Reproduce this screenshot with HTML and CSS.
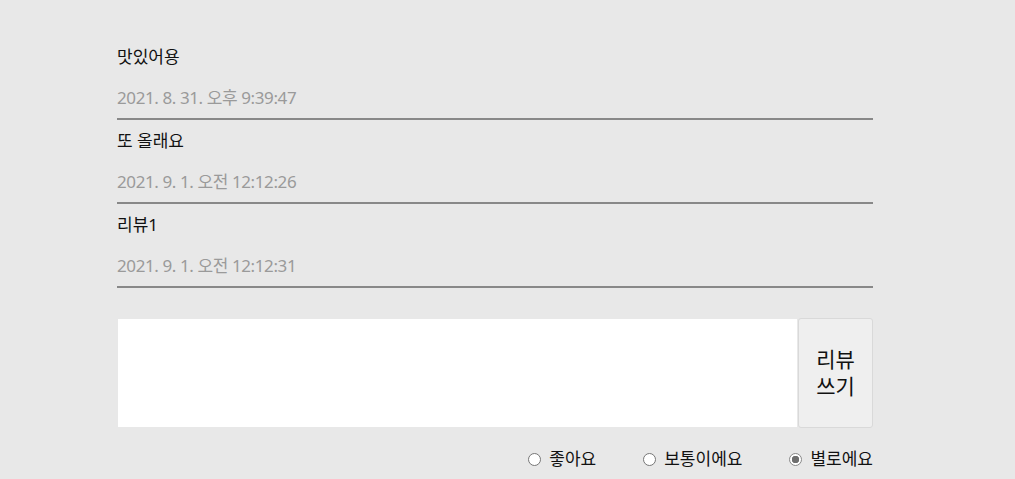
FILE: index.html
```html
<!DOCTYPE html>
<html lang="ko">
<head>
<meta charset="utf-8">
<link rel="stylesheet" href="styles.css">
</head>
<body>
<main class="wrap">
  <ul class="reviews">
    <li class="review">
      <p class="review-text">맛있어용</p>
      <p class="review-date">2021. 8. 31. 오후 9:39:47</p>
    </li>
    <li class="review">
      <p class="review-text">또 올래요</p>
      <p class="review-date">2021. 9. 1. 오전 12:12:26</p>
    </li>
    <li class="review">
      <p class="review-text">리뷰1</p>
      <p class="review-date">2021. 9. 1. 오전 12:12:31</p>
    </li>
  </ul>
  <form class="write">
    <div class="write-row">
      <textarea class="write-input"></textarea>
      <button type="button" class="write-btn">리뷰<br>쓰기</button>
    </div>
    <div class="ratings">
      <label class="rating"><input type="radio" name="r" class="radio">좋아요</label>
      <label class="rating"><input type="radio" name="r" class="radio">보통이에요</label>
      <label class="rating"><input type="radio" name="r" class="radio" checked>별로에요</label>
    </div>
  </form>
</main>
</body>
</html>
```

FILE: styles.css
```css
html, body {
  margin: 0;
  padding: 0;
  background: #e8e8e8;
}
body {
  font-family: "Noto Sans", "Noto Sans CJK KR", sans-serif;
  font-size: 17px;
  color: #111;
}
.wrap {
  width: 756px;
  margin-left: 117px;
  padding-top: 36px;
}
.reviews {
  list-style: none;
  margin: 0;
  padding: 0;
}
.review {
  padding: 11px 0 10px;
  border-bottom: 2px solid #888;
}
.review-text {
  margin: 0;
  line-height: 20px;
  font-size: 17px;
  color: #111;
}
.review-date {
  margin: 21px 0 0;
  line-height: 20px;
  font-size: 17px;
  letter-spacing: -0.4px;
  color: #9a9a9a;
}
.write {
  margin-top: 30px;
}
.write-row {
  display: flex;
  height: 110px;
}
.write-input {
  flex: 1;
  margin: 0;
  border: 1px solid #e8e8e8;
  background: #fff;
  resize: none;
  padding: 4px;
  font-family: inherit;
  font-size: 16px;
  outline: none;
}
.write-btn {
  width: 75px;
  margin: 0;
  padding: 0;
  border: 1px solid #d9d9d9;
  border-radius: 3px;
  background: #efefef;
  font-family: inherit;
  font-size: 21px;
  line-height: 27px;
  color: #111;
}
.ratings {
  display: flex;
  justify-content: flex-end;
  gap: 47px;
  margin-top: 21px;
  line-height: 20px;
}
.rating {
  display: flex;
  align-items: center;
  font-size: 17px;
  color: #111;
}
.radio {
  appearance: none;
  -webkit-appearance: none;
  width: 13px;
  height: 13px;
  margin: 0 8px 0 0;
  border: 1px solid #767676;
  border-radius: 50%;
  background: #fff;
  box-sizing: border-box;
}
.radio:checked {
  border-color: #8a8a8a;
  background: radial-gradient(circle, #6f6f6f 0 3.5px, #fff 4px);
}
```
